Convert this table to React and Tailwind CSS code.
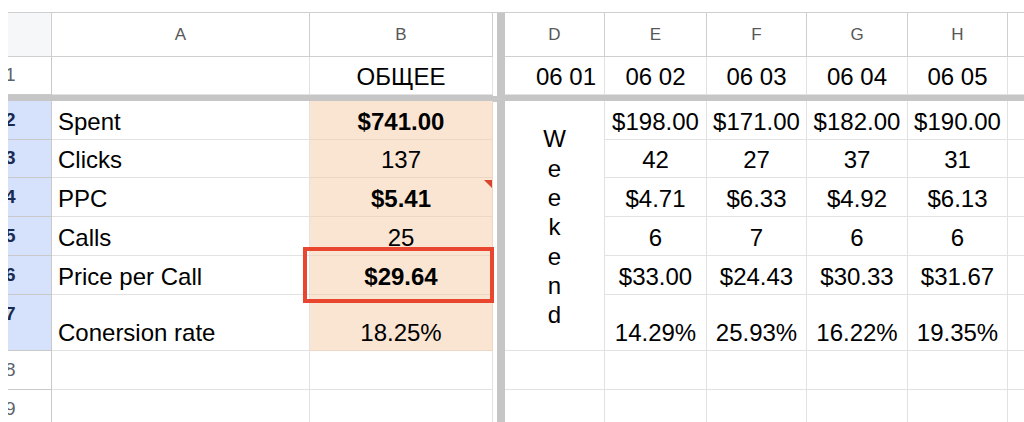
import React from "react";
import clsx from "clsx";

const rows = [
  { n: "2", label: "Spent", total: "$741.00", bold: true, h: "h-[39px]", days: ["$198.00", "$171.00", "$182.00", "$190.00"] },
  { n: "3", label: "Clicks", total: "137", h: "h-[38px]", days: ["42", "27", "37", "31"] },
  { n: "4", label: "PPC", total: "$5.41", bold: true, note: true, h: "h-[39px]", days: ["$4.71", "$6.33", "$4.92", "$6.13"] },
  { n: "5", label: "Calls", total: "25", h: "h-[39px]", days: ["6", "7", "6", "6"] },
  { n: "6", label: "Price per Call", total: "$29.64", bold: true, h: "h-[39px]", days: ["$33.00", "$24.43", "$30.33", "$31.67"] },
  { n: "7", label: "Conersion rate", total: "18.25%", h: "h-[56px]", tall: true, days: ["14.29%", "25.93%", "16.22%", "19.35%"] },
];

// widths of columns E..I
const dayCols = ["w-[102px]", "w-[100px]", "w-[101px]", "w-[100px]", "w-[100px]"];
const letters = ["E", "F", "G", "H", ""];
const dates = ["06 02", "06 03", "06 04", "06 05", ""];

function Cell({ w, className = "", children }) {
  return (
    <div
      className={clsx(
        "flex shrink-0 items-end justify-center border-r border-b border-[#e2e2e2] pb-[3px] leading-[28px]",
        w,
        className
      )}
    >
      {children}
    </div>
  );
}

function HeadCell({ w, children }) {
  return (
    <div className={clsx("flex shrink-0 items-center justify-center border-r border-b border-[#cfcfcf] text-[17px] text-[#575757]", w)}>
      {children}
    </div>
  );
}

function RowNum({ n, active, tall }) {
  return (
    <div
      className={clsx(
        "flex w-[44px] shrink-0 overflow-hidden border-r border-b border-[#c9c9c9] text-[19px]",
        tall ? "items-start pt-[5px]" : "items-center",
        active ? "bg-[#d6e2fb] font-bold text-[#1b2a4e]" : "bg-white text-[#5f6368]"
      )}
    >
      <span className="-ml-[3px]">{n}</span>
    </div>
  );
}

function Divider() {
  return (
    <div className="flex w-[12px] shrink-0 flex-col">
      <div className="flex h-[83px]">
        <div className="w-[4px] bg-white" />
        <div className="w-[8px] bg-[#c6c6c6]" />
      </div>
      <div className="h-[6px] bg-[#c6c6c6]" />
      <div className="flex flex-1">
        <div className="w-[4px] bg-white" />
        <div className="w-[8px] bg-[#c6c6c6]" />
      </div>
    </div>
  );
}

export default function App() {
  return (
    <div className="relative h-[422px] w-[1024px] overflow-hidden bg-white pl-2 pt-3 font-['Liberation_Sans',Arial,sans-serif] text-[24px] text-black">
      <div className="flex border-t border-[#cfcfcf]">
        {/* Left pane: row numbers, A, B */}
        <div className="flex w-[485px] shrink-0 flex-col">
          <div className="flex h-[44px]">
            <div className="w-[44px] shrink-0 border-r border-b border-[#cfcfcf] bg-[#f6f7f9]" />
            <HeadCell w="w-[258px]">A</HeadCell>
            <HeadCell w="w-[183px]">B</HeadCell>
          </div>
          <div className="flex h-[38px]">
            <RowNum n="1" />
            <Cell w="w-[258px]" />
            <Cell w="w-[183px]">ОБЩЕЕ</Cell>
          </div>
          <div className="h-[6px] bg-[#c6c6c6]" />
          {rows.map((r) => (
            <div key={r.n} className={clsx("flex", r.h)}>
              <RowNum n={r.n} active tall={r.tall} />
              <Cell w="w-[258px]" className="justify-start pl-[6px]">
                {r.label}
              </Cell>
              <Cell
                w="w-[183px]"
                className={clsx("relative border-[#ecd6c4] bg-[#fae5d3]", r.bold && "font-bold")}
              >
                {r.note && (
                  <div className="absolute right-0 top-[2px] h-0 w-0 border-l-[8px] border-t-[8px] border-l-transparent border-t-[#d9452f]" />
                )}
                {r.total}
              </Cell>
            </div>
          ))}
          {["8", "9"].map((n) => (
            <div key={n} className="flex h-[39px]">
              <RowNum n={n} />
              <Cell w="w-[258px]" />
              <Cell w="w-[183px]" />
            </div>
          ))}
        </div>

        <Divider />

        {/* Right pane: D..I */}
        <div className="flex shrink-0 flex-col">
          <div className="flex h-[44px]">
            <HeadCell w="w-[100px]">D</HeadCell>
            {letters.map((l, i) => (
              <HeadCell key={i} w={dayCols[i]}>
                {l}
              </HeadCell>
            ))}
          </div>
          <div className="flex h-[38px]">
            <Cell w="w-[100px]" className="justify-end pr-[8px]">
              06 01
            </Cell>
            {dates.map((d, i) => (
              <Cell key={i} w={dayCols[i]}>
                {d}
              </Cell>
            ))}
          </div>
          <div className="h-[6px] bg-[#c6c6c6]" />
          <div className="flex">
            <div className="flex h-[250px] w-[100px] shrink-0 flex-col items-center justify-center border-r border-b border-[#e2e2e2] pt-[3px] leading-[29.3px]">
              {"Weekend".split("").map((ch, i) => (
                <span key={i}>{ch}</span>
              ))}
            </div>
            <div className="flex flex-col">
              {rows.map((r) => (
                <div key={r.n} className={clsx("flex", r.h)}>
                  {dayCols.map((w, i) => (
                    <Cell key={i} w={w}>
                      {r.days[i]}
                    </Cell>
                  ))}
                </div>
              ))}
            </div>
          </div>
          {["8", "9"].map((n) => (
            <div key={n} className="flex h-[39px]">
              <Cell w="w-[100px]" />
              {dayCols.map((w, i) => (
                <Cell key={i} w={w} />
              ))}
            </div>
          ))}
        </div>
      </div>

      {/* highlight box around B6 */}
      <div className="absolute left-[303px] top-[247px] h-[56px] w-[191px] border-4 border-[#e8462f]" />
    </div>
  );
}
